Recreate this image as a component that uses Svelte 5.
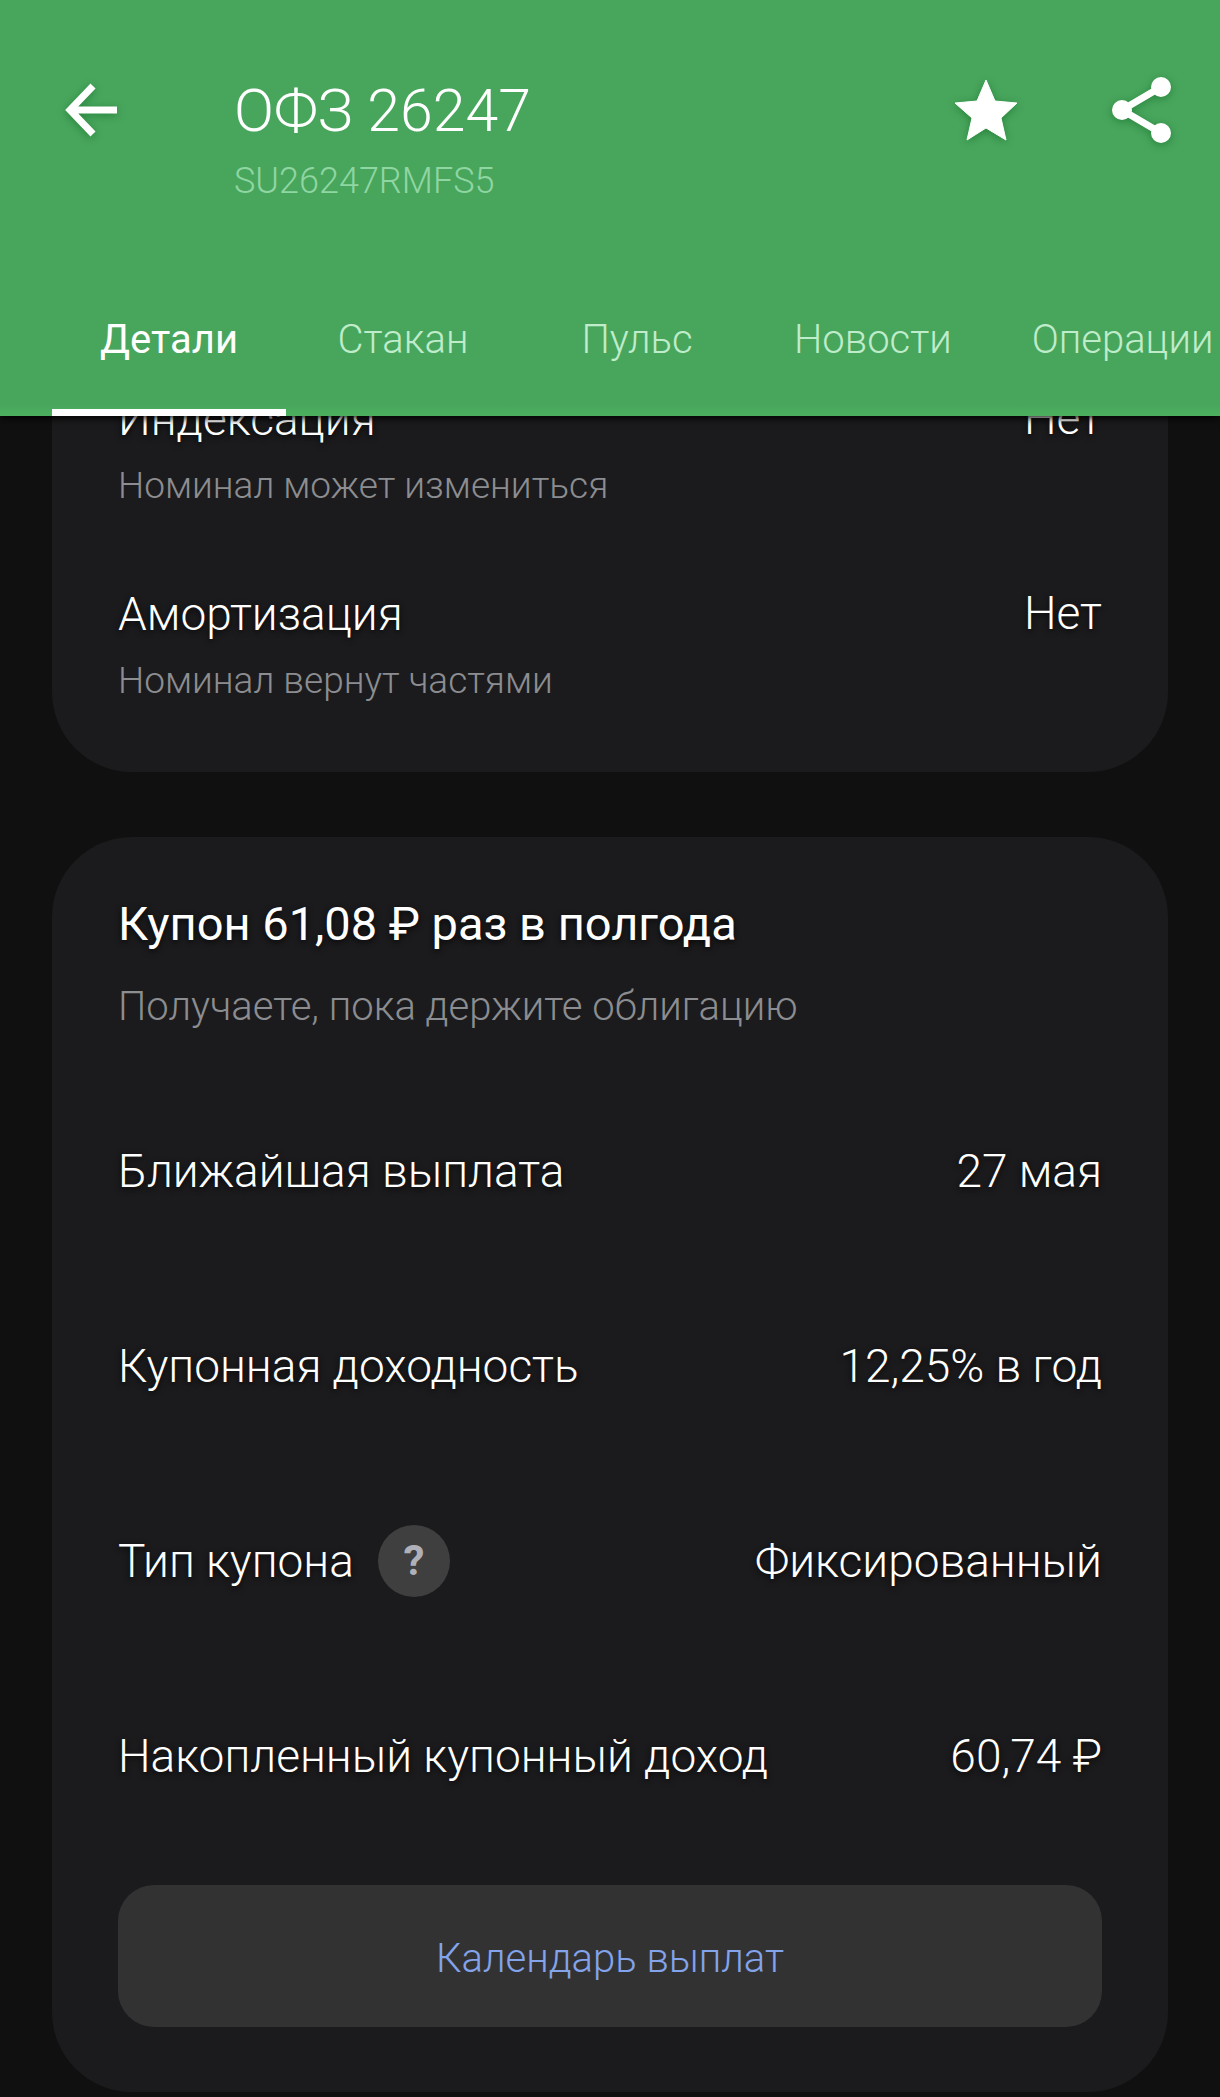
<script>
  let activeTab = $state('Детали');
  let favorite = $state(true);

  const tabs = ['Детали', 'Стакан', 'Пульс', 'Новости', 'Операции'];

  const principal = [
    { label: 'Индексация', note: 'Номинал может измениться', value: 'Нет' },
    { label: 'Амортизация', note: 'Номинал вернут частями', value: 'Нет' }
  ];

  const coupon = [
    { label: 'Ближайшая выплата', value: '27 мая' },
    { label: 'Купонная доходность', value: '12,25% в год' },
    { label: 'Тип купона', value: 'Фиксированный', help: true },
    { label: 'Накопленный купонный доход', value: '60,74 ₽' }
  ];
</script>

{#snippet rows(items)}
  <dl>
    {#each items as item (item.label)}
      <div class="row" class:noted={item.note}>
        <dt>
          <span class="label">
            {item.label}
            {#if item.help}
              <button class="help" aria-label="Что такое тип купона">?</button>
            {/if}
          </span>
          {#if item.note}
            <span class="note">{item.note}</span>
          {/if}
        </dt>
        <dd>{item.value}</dd>
      </div>
    {/each}
  </dl>
{/snippet}

<div class="page">
  <header>
    <div class="bar">
      <button class="icon" aria-label="Назад">
        <svg width="56" height="56" viewBox="0 0 56 56" fill="none" stroke="#fff" stroke-width="7">
          <path d="M31 4 8 28l23 24M8 28h47" />
        </svg>
      </button>
      <div class="title">
        <h1>ОФЗ 26247</h1>
        <p>SU26247RMFS5</p>
      </div>
      <div class="actions">
        <button class="icon" aria-label="В избранное" aria-pressed={favorite} onclick={() => (favorite = !favorite)}>
          <svg width="64" height="64" viewBox="0 0 64 64" stroke="#fff" fill={favorite ? '#fff' : 'none'}>
            <path d="M33 2l9 21 22 2-16 15 5 22-20-12-19 12 5-22L2 25l22-2z" />
          </svg>
        </button>
        <button class="icon" aria-label="Поделиться">
          <svg width="62" height="68" viewBox="0 0 62 68" fill="#fff">
            <path d="M51 11 12 34l39 23" fill="none" stroke="#fff" stroke-width="7" />
            <circle cx="51" cy="11" r="10" />
            <circle cx="12" cy="34" r="10" />
            <circle cx="51" cy="57" r="10" />
          </svg>
        </button>
      </div>
    </div>
    <nav>
      {#each tabs as tab}
        <button class:active={tab === activeTab} onclick={() => (activeTab = tab)}>{tab}</button>
      {/each}
    </nav>
  </header>

  <main>
    <section class="card">
      {@render rows(principal)}
    </section>

    <section class="card">
      <div class="head">
        <h2>Купон 61,08 ₽ раз в полгода</h2>
        <p>Получаете, пока держите облигацию</p>
      </div>
      {@render rows(coupon)}
      <button class="calendar">Календарь выплат</button>
    </section>
  </main>
</div>

<style>
  :global(body){background:#101010}
  .page{font-family:Roboto,"Open Sans",sans-serif;font-weight:300;color:#fff;background:#101010;overflow:hidden}
  h1,h2,p,dl,dd{margin:0;font-weight:inherit}
  button{font:inherit;color:inherit;background:none;border:0;padding:0;cursor:pointer}

  header{position:relative;background:linear-gradient(180deg,#48a55c calc(100% - 12px),#4bb05e);box-shadow:0 2px 8px #000}
  .bar{display:flex;align-items:flex-start;height:264px;padding:76px 48px 0 62px;box-sizing:border-box}
  .icon{display:flex;align-items:center;justify-content:center;height:68px}
  .icon svg{display:block;filter:drop-shadow(0 2px 4px rgba(0,90,20,.45))}
  .title{flex:1;margin-left:116px}
  h1{font-size:59px;line-height:70px}
  .title p{font-size:36px;line-height:70px;color:#8fd6a3}
  .actions{display:flex;gap:93px}

  nav{display:flex;padding-left:52px;overflow:hidden}
  nav button{flex:none;min-width:234px;height:152px;padding:6px 40px 0;border-bottom:7px solid transparent;font-size:40px;color:#bfeccb}
  nav button.active{color:#fff;border-color:#fff;font-weight:400}

  main{display:grid;gap:65px;margin-top:-88px;padding:0 52px 5px}
  .card{background:#1b1b1d;border-radius:80px;padding:27px 66px}
  .row{display:flex;align-items:center;justify-content:space-between;min-height:195px;font-size:46px;line-height:66px}
  .row,h2{text-shadow:0 2px 6px rgba(0,0,0,.8)}
  .noted dd{align-self:flex-start;margin-top:30px}
  .label{display:flex;align-items:center;gap:24px}
  .note,.head p{color:#8c8d90;text-shadow:none}
  .note{display:block;font-size:37px;line-height:68px}
  .help{width:72px;height:72px;border-radius:50%;background:#3f3f40;color:#b0b1b8;font-size:42px;font-weight:700}

  .head{padding-top:20px;height:189px}
  h2{font-size:47px;line-height:80px;font-weight:400}
  .head p{font-size:40px;line-height:86px}
  .calendar{display:block;width:100%;height:142px;margin:32px 0 38px;padding-top:4px;border-radius:36px;background:#323233;color:#83a3ea;font-size:40px}
</style>
